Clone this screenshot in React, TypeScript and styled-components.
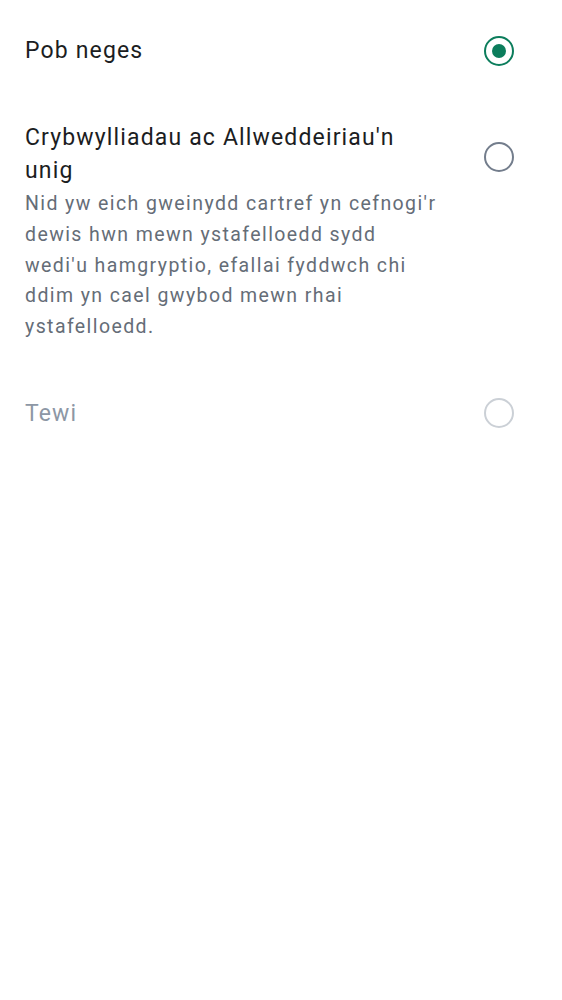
import React, { useState } from 'react';
import styled, { createGlobalStyle } from 'styled-components';

const GlobalStyle = createGlobalStyle`
  html, body {
    margin: 0;
    padding: 0;
    background: #ffffff;
  }
  body {
    font-family: Roboto, "Noto Sans", "Liberation Sans", sans-serif;
    -webkit-font-smoothing: antialiased;
  }
`;

interface Option {
  id: string;
  title: string;
  description?: string[];
  disabled?: boolean;
}

const options: Option[] = [
  { id: 'all', title: 'Pob neges' },
  {
    id: 'mentions',
    title: "Crybwylliadau ac Allweddeiriau'n unig",
    description: [
      "Nid yw eich gweinydd cartref yn cefnogi'r",
      'dewis hwn mewn ystafelloedd sydd',
      "wedi'u hamgryptio, efallai fyddwch chi",
      'ddim yn cael gwybod mewn rhai',
      'ystafelloedd.',
    ],
  },
  { id: 'mute', title: 'Tewi', disabled: true },
];

const App = () => {
  const [selected, setSelected] = useState('all');

  return (
    <>
      <GlobalStyle />
      <Page>
        <OptionList role="radiogroup">
          {options.map((option) => (
            <OptionRow
              key={option.id}
              role="radio"
              aria-checked={selected === option.id}
              aria-disabled={option.disabled}
              $disabled={option.disabled}
              onClick={() => !option.disabled && setSelected(option.id)}
            >
              <OptionTitle $disabled={option.disabled}>{option.title}</OptionTitle>
              <RadioCircle
                $checked={selected === option.id}
                $disabled={option.disabled}
                $lowered={!!option.description}
              />
              {option.description && (
                <OptionDescription>
                  {option.description.map((line, i) => (
                    <React.Fragment key={i}>
                      {line}
                      {i < option.description!.length - 1 && <br />}
                    </React.Fragment>
                  ))}
                </OptionDescription>
              )}
            </OptionRow>
          ))}
        </OptionList>
      </Page>
    </>
  );
};

export default App;

const Page = styled.div`
  min-height: 1000px;
  background: #ffffff;
`;

const OptionList = styled.div`
  display: flex;
  flex-direction: column;
  padding: 7px 48px 0 25px;
`;

const OptionRow = styled.div<{ $disabled?: boolean }>`
  display: grid;
  grid-template-columns: 1fr 30px;
  column-gap: 39px;
  align-items: center;
  padding: 27px 0;
  cursor: ${({ $disabled }) => ($disabled ? 'default' : 'pointer')};
`;

const OptionTitle = styled.div<{ $disabled?: boolean }>`
  font-size: 23px;
  line-height: 33px;
  letter-spacing: 0.05em;
  color: ${({ $disabled }) => ($disabled ? '#8d97a5' : '#1b1d22')};
`;

const RadioCircle = styled.span<{
  $checked?: boolean;
  $disabled?: boolean;
  $lowered?: boolean;
}>`
  position: relative;
  box-sizing: border-box;
  width: 30px;
  height: 30px;
  margin-top: ${({ $lowered }) => ($lowered ? '6px' : '0')};
  border-radius: 50%;
  border: 2.5px solid
    ${({ $checked, $disabled }) =>
      $checked ? '#0c7d5c' : $disabled ? '#cbd0d6' : '#737d8c'};

  &::after {
    content: '';
    display: ${({ $checked }) => ($checked ? 'block' : 'none')};
    position: absolute;
    top: 50%;
    left: 50%;
    width: 14px;
    height: 14px;
    border-radius: 50%;
    background: #0c7d5c;
    transform: translate(-50%, -50%);
  }
`;

const OptionDescription = styled.p`
  grid-column: 1 / 2;
  margin: 2px 0 0;
  font-size: 19.5px;
  line-height: 30.8px;
  letter-spacing: 0.072em;
  white-space: nowrap;
  color: #656d77;
`;
